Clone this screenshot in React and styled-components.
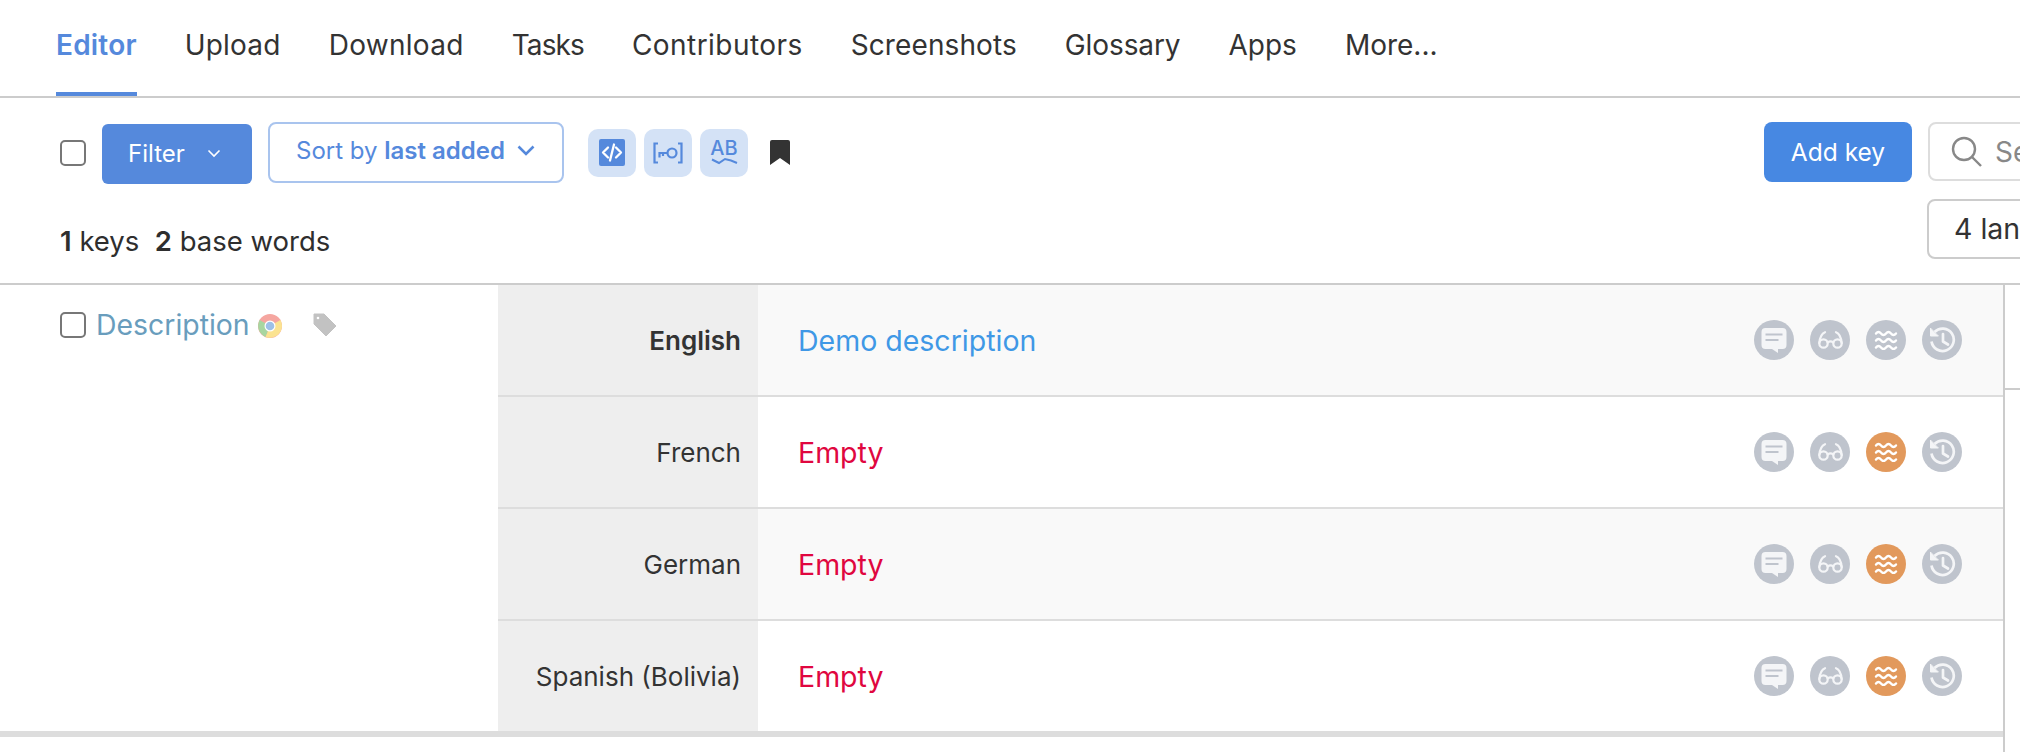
import styled, { createGlobalStyle } from 'styled-components';

const GlobalStyle = createGlobalStyle`
  html, body {
    margin: 0;
    padding: 0;
    background: #fff;
  }
  * {
    box-sizing: border-box;
  }
`;

const Root = styled.div`
  width: 2020px;
  height: 752px;
  overflow: hidden;
  font-family: Inter, "Liberation Sans", sans-serif;
  color: #2e2e2e;
`;

const Nav = styled.nav`
  display: flex;
  gap: 48px;
  height: 98px;
  padding-left: 56px;
  border-bottom: 2px solid #ccc;
`;

const NavItem = styled.a`
  height: 96px;
  padding-top: 26px;
  font-size: 28px;
  line-height: 38px;
  letter-spacing: ${(p) => p.$track || 0}px;
  font-weight: ${(p) => (p.$active ? 600 : 400)};
  color: ${(p) => (p.$active ? '#5589dc' : '#333')};
  border-bottom: 4px solid ${(p) => (p.$active ? '#5589dc' : 'transparent')};
`;

const Toolbar = styled.div`
  display: flex;
  height: 187px;
  border-bottom: 2px solid #ccc;
`;

const ToolbarMain = styled.div`
  flex: 1;
  padding: 24px 0 0 60px;
`;

const FilterRow = styled.div`
  display: flex;
  align-items: center;
  height: 62px;
`;

const Checkbox = styled.span`
  display: block;
  flex: none;
  width: 26px;
  height: 26px;
  border: 2px solid #777;
  border-radius: 5px;
  background: #fff;
`;

const FilterButton = styled.button`
  display: flex;
  align-items: center;
  justify-content: space-between;
  width: 150px;
  height: 60px;
  margin: 1px 16px 0;
  padding: 0 31px 0 26px;
  border: 0;
  border-radius: 6px;
  background: #5589dc;
  color: #fff;
  font: 400 24px Inter, sans-serif;
`;

const SortButton = styled.button`
  display: flex;
  align-items: center;
  gap: 12px;
  width: 296px;
  height: 61px;
  margin-top: -2px;
  padding: 0 0 3px 26px;
  border: 2px solid #a9c4ee;
  border-radius: 8px;
  background: #fff;
  color: #5589dc;
  font: 400 24px Inter, sans-serif;
  white-space: nowrap;

  b {
    font-weight: 600;
  }
`;

const ToggleGroup = styled.div`
  display: flex;
  gap: 8px;
  margin: -1px 0 0 24px;
`;

const Toggle = styled.span`
  display: flex;
  flex-direction: column;
  align-items: center;
  justify-content: center;
  width: 48px;
  height: 48px;
  border-radius: 10px;
  background: #d4e2f6;
`;

const SpellLabel = styled.span`
  font-size: 20px;
  font-weight: 500;
  line-height: 17px;
  color: #5589dc;
`;

const Bookmark = styled.svg`
  width: 20px;
  height: 25px;
  margin: -1px 0 0 22px;
`;

const Stats = styled.div`
  margin-top: 39px;
  font-size: 27.5px;
  line-height: 36px;

  b {
    font-weight: 600;
  }
`;

const ToolbarSide = styled.div`
  flex: none;
  display: flex;
  flex-direction: column;
  width: 256px;
  padding-top: 24px;
  overflow: hidden;
`;

const SideTop = styled.div`
  display: flex;
  align-items: flex-start;
  gap: 16px;
`;

const AddKey = styled.button`
  flex: none;
  width: 148px;
  height: 60px;
  padding-bottom: 2px;
  border: 0;
  border-radius: 8px;
  background: #4788e2;
  color: #fff;
  font: 400 24.5px Inter, sans-serif;
`;

const Search = styled.div`
  flex: none;
  display: flex;
  align-items: center;
  gap: 12px;
  width: 300px;
  height: 59px;
  padding-left: 21px;
  border: 2px solid #ddd;
  border-radius: 8px;
  font-size: 28px;
  color: #888;
`;

const SearchIcon = styled.svg`
  flex: none;
  width: 32px;
  height: 32px;
`;

const LangSelect = styled.div`
  flex: none;
  width: 300px;
  height: 60px;
  margin: 17px 0 0 163px;
  padding-left: 25px;
  border: 2px solid #ccc;
  border-radius: 8px;
  font-size: 28.5px;
  line-height: 56px;
  color: #333;
`;

const Table = styled.div`
  display: flex;
  height: 467px;
`;

const TableMain = styled.div`
  flex: 1;
  display: flex;
  height: 452px;
  border-bottom: 6px solid #ddd;
`;

const KeyCell = styled.div`
  flex: none;
  display: flex;
  align-items: center;
  align-self: flex-start;
  width: 498px;
  padding: 21px 0 0 60px;
`;

const KeyName = styled.span`
  margin-left: 10px;
  font-size: 28.4px;
  line-height: 38px;
  color: #699dbd;
`;

const ChromeIcon = styled.svg`
  width: 24px;
  height: 24px;
  margin: 2px 0 0 8px;
`;

const TagIcon = styled.svg`
  width: 24px;
  height: 24px;
  margin: 0 0 0 31px;
`;

const Rows = styled.div`
  flex: 1;
`;

const Row = styled.div`
  display: flex;
  height: 112px;
  border-bottom: 2px solid #ddd;
  background: ${(p) => (p.$shaded ? '#f9f9f9' : '#fff')};

  &:last-child {
    height: 110px;
    border-bottom: 0;
  }
`;

const LangCell = styled.div`
  flex: none;
  display: flex;
  align-items: center;
  justify-content: flex-end;
  width: 260px;
  padding-right: 17px;
  background: #eee;
  font-size: 26px;
  font-weight: ${(p) => (p.$base ? 600 : 400)};
  color: #333;
`;

const ValueCell = styled.div`
  flex: 1;
  display: flex;
  align-items: center;
  padding: 0 41px 0 40px;
`;

const Value = styled.span`
  flex: 1;
  font-size: 28.5px;
  color: ${(p) => (p.$empty ? '#e0073f' : '#3f98e6')};
`;

const Actions = styled.div`
  display: flex;
  gap: 16px;
`;

const Action = styled.span`
  display: flex;
  align-items: center;
  justify-content: center;
  width: 40px;
  height: 40px;
  border-radius: 50%;
  background: ${(p) => (p.$warn ? '#e2995c' : '#bfc4cd')};
`;

const SideColumn = styled.div`
  flex: none;
  width: 17px;
  border-left: 2px solid #ccc;
`;

const SideCell = styled.div`
  height: 105px;
  border-bottom: 2px solid #ccc;
`;

const glyph = {
  fill: 'none',
  stroke: '#f4f5f7',
  strokeLinecap: 'round',
  strokeLinejoin: 'round',
};

function CodeIcon() {
  return (
    <svg width="26" height="27" viewBox="0 0 26 27">
      <rect width="26" height="27" rx="2" fill="#5589dc" />
      <path d="M9 8.500l-5 5 5 5M17 8.500l5 5-5 5M15 5.500l-4 16" fill="none" stroke="#fff" strokeWidth="2.300" strokeLinecap="round" strokeLinejoin="round" />
    </svg>
  );
}

function KeyIcon() {
  return (
    <svg width="30" height="22" viewBox="0 0 30 22" fill="none" stroke="#5589dc" strokeWidth="2.200">
      <path d="M5 1.500H1.500v19H5M25 1.500h3.500v19H25" />
      <circle cx="19" cy="11" r="4.500" />
      <path d="M14.500 11H6.500v4.500M10 11v3" />
    </svg>
  );
}

function CommentIcon() {
  return (
    <svg width="26" height="25" viewBox="0 0 26 25">
      <path d="M4.500 0h17a4 4 0 0 1 4 4v13a4 4 0 0 1-4 4H17v4l-6-4H4.500a4 4 0 0 1-4-4V4a4 4 0 0 1 4-4z" fill="#f4f5f7" />
      <path d="M4.500 6.500h17M4.500 12h13" stroke="#bfc4cd" strokeWidth="2" />
    </svg>
  );
}

function GlassesIcon() {
  return (
    <svg width="25" height="18" viewBox="0 0 25 18" {...glyph} strokeWidth="2.200">
      <circle cx="5.500" cy="12.500" r="4.200" />
      <circle cx="19.500" cy="12.500" r="4.200" />
      <path d="M9.700 11.500c1.800-1.500 3.800-1.500 5.600 0M1.300 12C1.800 7 3.500 2.500 7 1.200M23.700 12C23.200 7 21.500 2.500 18 1.200" />
    </svg>
  );
}

function WavesIcon() {
  return (
    <svg width="24" height="20" viewBox="0 0 24 20" {...glyph} stroke="#fff" strokeWidth="2.400">
      <path d="M2 3.500q2.500-3 5 0t5 0 5 0 5 0" />
      <path d="M2 10.500q2.500-3 5 0t5 0 5 0 5 0" />
      <path d="M2 17.500q2.500-3 5 0t5 0 5 0 5 0" />
    </svg>
  );
}

function HistoryIcon() {
  return (
    <svg width="28" height="28" viewBox="0 0 28 28" {...glyph} strokeWidth="2.700">
      <path d="M3.500 15.500A11.200 11.200 0 1 0 6.500 6" strokeLinecap="butt" />
      <path d="M2.500 2.500v7.500h7.500z" fill="#f4f5f7" strokeWidth="1" />
      <path d="M15 8v7.500l5 3" />
    </svg>
  );
}

const rows = [
  { lang: 'English', value: 'Demo description', base: true },
  { lang: 'French', value: 'Empty' },
  { lang: 'German', value: 'Empty' },
  { lang: 'Spanish (Bolivia)', value: 'Empty' },
];

const tabs = [
  { name: 'Upload', track: 0.2 },
  { name: 'Download', track: 0.3 },
  { name: 'Tasks', track: -0.9 },
  { name: 'Contributors', track: 0.45 },
  { name: 'Screenshots', track: 0.1 },
  { name: 'Glossary', track: -0.1 },
  { name: 'Apps', track: 0 },
  { name: 'More...', track: 0 },
];

export default function App() {
  return (
    <Root>
      <GlobalStyle />
      <Nav>
        <NavItem $active $track={0.2}>Editor</NavItem>
        {tabs.map((tab) => (
          <NavItem key={tab.name} $track={tab.track}>{tab.name}</NavItem>
        ))}
      </Nav>
      <Toolbar>
        <ToolbarMain>
          <FilterRow>
            <Checkbox />
            <FilterButton>
              Filter
              <svg width="14" height="9" viewBox="0 0 14 9" fill="none" stroke="#fff" strokeWidth="1.600">
                <path d="M1.500 1.500L7 7l5.500-5.500" />
              </svg>
            </FilterButton>
            <SortButton>
              <span>Sort by <b>last added</b></span>
              <svg width="18" height="11" viewBox="0 0 18 11" fill="none" stroke="#5589dc" strokeWidth="2.600">
                <path d="M1.500 1.500L9 9l7.500-7.500" />
              </svg>
            </SortButton>
            <ToggleGroup>
              <Toggle><CodeIcon /></Toggle>
              <Toggle><KeyIcon /></Toggle>
              <Toggle>
                <SpellLabel>AB</SpellLabel>
                <svg width="27" height="8" viewBox="0 0 27 8" fill="none" stroke="#5589dc" strokeWidth="2">
                  <path d="M1 2.500L8 6l6-4 6 1.500L26 6" />
                </svg>
              </Toggle>
            </ToggleGroup>
            <Bookmark viewBox="0 0 20 25">
              <path d="M2 0h16a2 2 0 0 1 2 2v23l-10-7-10 7V2a2 2 0 0 1 2-2z" fill="#333" />
            </Bookmark>
          </FilterRow>
          <Stats><b>1</b> keys&nbsp; <b>2</b> base words</Stats>
        </ToolbarMain>
        <ToolbarSide>
          <SideTop>
            <AddKey>Add key</AddKey>
            <Search>
              <SearchIcon viewBox="0 0 32 32" fill="none" stroke="#888" strokeWidth="2.400">
                <circle cx="13" cy="13" r="11" />
                <path d="M21 21l9 9" />
              </SearchIcon>
              Search
            </Search>
          </SideTop>
          <LangSelect>4 languages</LangSelect>
        </ToolbarSide>
      </Toolbar>
      <Table>
        <TableMain>
          <KeyCell>
            <Checkbox />
            <KeyName>Description</KeyName>
            <ChromeIcon viewBox="0 0 24 24">
              <circle cx="12" cy="12" r="12" fill="#f5a6a0" />
              <path d="M12 12L1.600 6a12 12 0 0 0 6 16.900z" fill="#a8d6a0" />
              <path d="M12 12l-4.400 10.900A12 12 0 0 0 24 12a12 12 0 0 0-1.600-6z" fill="#fbe391" />
              <circle cx="12" cy="12" r="5.500" fill="#fff" />
              <circle cx="12" cy="12" r="4.300" fill="#9dc0e8" />
            </ChromeIcon>
            <TagIcon viewBox="0 0 24 24">
              <path d="M1 1h10l12 12-10 10L1 11z" fill="#c2c2c2" strokeLinejoin="round" stroke="#c2c2c2" strokeWidth="1" />
              <circle cx="5" cy="5" r="1.300" fill="#fff" />
            </TagIcon>
          </KeyCell>
          <Rows>
            {rows.map((row, i) => (
              <Row key={row.lang} $shaded={i % 2 === 0}>
                <LangCell $base={row.base}>{row.lang}</LangCell>
                <ValueCell>
                  <Value $empty={!row.base}>{row.value}</Value>
                  <Actions>
                    <Action><CommentIcon /></Action>
                    <Action><GlassesIcon /></Action>
                    <Action $warn={!row.base}><WavesIcon /></Action>
                    <Action><HistoryIcon /></Action>
                  </Actions>
                </ValueCell>
              </Row>
            ))}
          </Rows>
        </TableMain>
        <SideColumn>
          <SideCell />
        </SideColumn>
      </Table>
    </Root>
  );
}
